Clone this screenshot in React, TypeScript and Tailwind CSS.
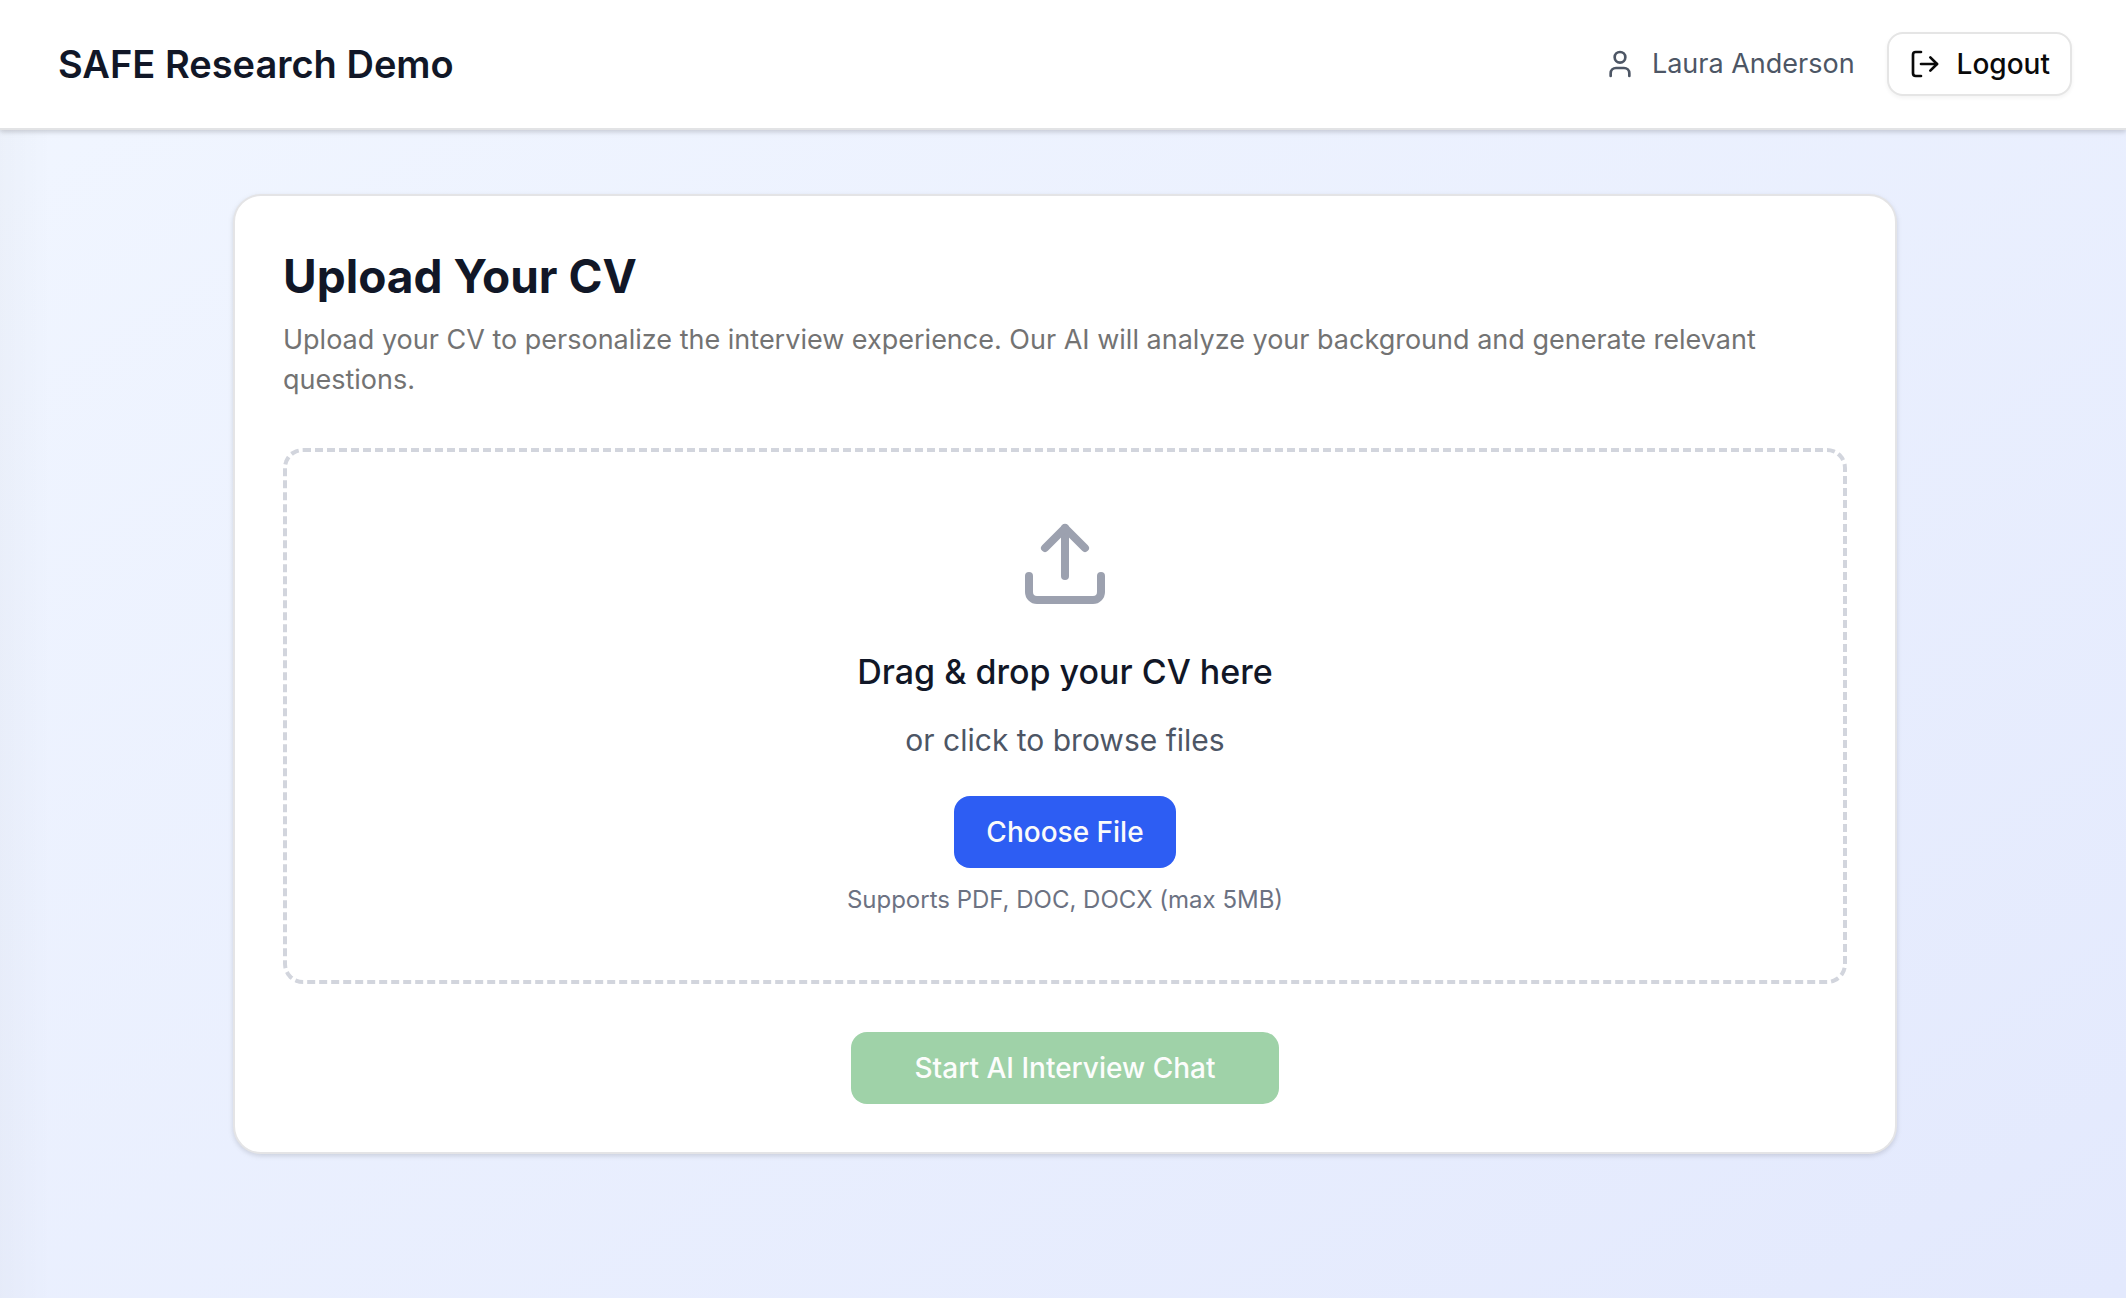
import { useRef } from "react";
import { LogOut, Upload, User } from "lucide-react";

function Header() {
  return (
    <header className="relative border-b-2 border-[#e2e3e5] bg-white shadow-[0_2px_6px_rgba(0,0,0,0.1),0_2px_4px_rgba(0,0,0,0.08)]">
      <div className="flex h-32 items-center justify-between pr-[54px] pl-[58px]">
        <h1 className="text-[38px] leading-[56px] font-semibold text-[#111727]">SAFE Research Demo</h1>
        <div className="flex items-center gap-8">
          <div className="flex items-center gap-4 text-[27px] leading-10 text-[#4d5665]">
            <User className="h-8 w-8" />
            <span>Laura Anderson</span>
          </div>
          <button
            type="button"
            className="flex h-16 items-center gap-4 rounded-2xl border-2 border-[#e5e5e5] bg-white px-5 text-[28px] leading-10 font-medium text-[#0a0a0a] shadow-[0_2px_4px_rgba(0,0,0,0.05)]"
          >
            <LogOut className="h-8 w-8" />
            Logout
          </button>
        </div>
      </div>
    </header>
  );
}

function DropZone() {
  const inputRef = useRef<HTMLInputElement>(null);

  return (
    <div className="flex flex-col items-center rounded-[20px] border-4 border-dashed border-[#d2d5dd] p-16 text-center">
      <Upload className="h-24 w-24 text-[#9ca1af]" />
      <p className="mt-8 text-[34px] leading-[56px] font-medium text-[#111727]">Drag &amp; drop your CV here</p>
      <p className="mt-4 text-[30px] leading-[48px] text-[#4d5665]">or click to browse files</p>
      <input ref={inputRef} type="file" accept=".pdf,.doc,.docx" aria-label="CV file" className="hidden" />
      <button
        type="button"
        onClick={() => inputRef.current?.click()}
        className="mt-8 h-[72px] rounded-2xl bg-[#2d5df3] px-8 text-[28px] leading-10 font-medium text-[#fafafa]"
      >
        Choose File
      </button>
      <p className="mt-4 text-[24px] leading-8 text-[#6c7282]">Supports PDF, DOC, DOCX (max 5MB)</p>
    </div>
  );
}

export default function App() {
  return (
    <div className="flex min-h-screen flex-col bg-linear-to-br from-[#f1f6ff] to-[#e3e9fd] font-['Inter',sans-serif] antialiased">
      <Header />
      <main className="flex-1 bg-linear-to-r from-black/2 to-transparent to-[52px] py-16 pl-1">
        <div className="mx-auto max-w-[1664px] rounded-[28px] border-2 border-[#e4e4e6] bg-white p-12 shadow-[0_2px_6px_rgba(0,0,0,0.08),0_2px_4px_rgba(0,0,0,0.06)]">
          <h2 className="text-[46px] leading-[64px] font-bold text-[#111727]">Upload Your CV</h2>
          <p className="mt-3 mb-12 text-[27px] leading-10 text-[#737373]">
            Upload your CV to personalize the interview experience. Our AI will analyze your background and generate
            relevant questions.
          </p>
          <DropZone />
          <div className="mt-12 flex justify-center">
            <button
              type="button"
              disabled
              className="h-[72px] rounded-2xl bg-[#9fd2a8] px-16 text-[28px] leading-10 font-medium text-[#fcfdfc]"
            >
              Start AI Interview Chat
            </button>
          </div>
        </div>
      </main>
    </div>
  );
}
